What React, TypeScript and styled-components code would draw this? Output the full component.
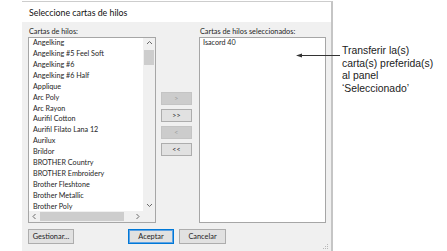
import React from "react";
import styled, { createGlobalStyle, css } from "styled-components";

const Global = createGlobalStyle`
  html, body { margin: 0; padding: 0; background: #ffffff; }
  body { font-family: Lato, "Noto Sans", sans-serif; }
`;

const Stage = styled.div`
  position: relative;
  width: 447px;
  height: 251px;
  overflow: hidden;
  display: flex;
  align-items: flex-start;
`;

const Dialog = styled.div`
  position: relative;
  margin: 1px 0 0 22px;
  width: 309px;
  height: 250px;
  border-top: 1px solid #cdcdcd;
  border-right: 2px solid #c5c5c5;
  display: flex;
  flex-direction: column;
  font-family: Lato, "Noto Sans", sans-serif;
  font-size: 7.2px;
  color: #1e1e1e;
`;

const TitleBar = styled.div`
  height: 20px;
  display: flex;
  align-items: center;
  padding-left: 7px;
  background: #ffffff;
  font-size: 8.8px;
  color: #111;
`;

const Body = styled.div`
  flex: 1;
  background: #f0f0f0;
  padding: 4px 5px 0 6px;
  display: flex;
  flex-direction: column;
`;

const MainRow = styled.div`
  display: flex;
  align-items: flex-start;
`;

const Column = styled.div`
  display: flex;
  flex-direction: column;
`;

const Label = styled.div`
  height: 11px;
  line-height: 11px;
  padding-left: 1px;
  white-space: nowrap;
  font-size: 7.3px;
`;

const ListBox = styled.div<{ $w: number; $scroll?: boolean }>`
  box-sizing: border-box;
  width: ${(p) => p.$w}px;
  height: 186px;
  border: 1px solid #a6a6a6;
  background: #ffffff;
  display: grid;
  ${(p) =>
    p.$scroll
      ? css`
          grid-template-columns: 1fr 12px;
          grid-template-rows: 1fr 11px;
        `
      : css`
          grid-template-columns: 1fr;
          grid-template-rows: 1fr;
        `}
`;

const Items = styled.div<{ $pad: number }>`
  overflow: hidden;
  padding-left: ${(p) => p.$pad}px;
`;

const Item = styled.div`
  height: 10.93px;
  line-height: 10.93px;
  white-space: nowrap;
`;

const VScroll = styled.div`
  background: #f0f0f0;
  display: grid;
  grid-template-rows: 11px 1fr 11px;
`;

const HScroll = styled.div`
  background: #f0f0f0;
  display: grid;
  grid-template-columns: 11px 1fr 11px;
`;

const Corner = styled.div`
  background: #f0f0f0;
`;

const ArrowCell = styled.div`
  display: flex;
  align-items: center;
  justify-content: center;
`;

const VTrack = styled.div`
  padding: 1px 1px 0 1px;
`;

const VThumb = styled.div`
  height: 15px;
  background: #cdcdcd;
`;

const HTrack = styled.div`
  padding: 1px 0 0 0;
`;

const HThumb = styled.div`
  width: 84px;
  height: 9px;
  background: #cdcdcd;
`;

const Middle = styled.div`
  display: flex;
  flex-direction: column;
  gap: 4px;
  margin: 0 7px 0 5px;
  padding-top: 66px;
`;

const Btn = styled.button<{ $w: number; $h: number; $primary?: boolean }>`
  box-sizing: border-box;
  width: ${(p) => p.$w}px;
  height: ${(p) => p.$h}px;
  padding: 0;
  margin: 0;
  font-family: inherit;
  font-size: 7.4px;
  line-height: 1;
  color: #1e1e1e;
  background: #e1e1e1;
  border: 1px solid #adadad;
  display: flex;
  align-items: center;
  justify-content: center;
  white-space: nowrap;
  ${(p) =>
    p.$primary &&
    css`
      border-color: #0078d7;
      box-shadow: inset 0 0 0 1px #5fa3e3;
    `}
  &:disabled {
    background: #cccccc;
    border-color: #c4c4c4;
    color: #9c9c9c;
  }
`;

const NavText = styled.span`
  font-size: 7px;
  letter-spacing: 0.3px;
`;

const BottomRow = styled.div`
  margin-top: 6px;
  display: grid;
  grid-template-columns: 1fr auto 1fr;
  align-items: center;
`;

const CenterGroup = styled.div`
  display: flex;
  gap: 5px;
`;

const Grip = styled.svg`
  position: absolute;
  right: 2px;
  bottom: 2px;
`;

const Note = styled.div`
  position: relative;
  margin: 45px 0 0 9px;
  font-family: "Liberation Sans", Arial, sans-serif;
  font-size: 10.4px;
  line-height: 12.5px;
  color: #222;
  white-space: nowrap;
`;

const NoteArrow = styled.svg`
  position: absolute;
  left: -46px;
  top: 8px;
`;

const Chevron = ({ dir }: { dir: "up" | "down" | "left" | "right" }) => {
  const pts = {
    up: "1,4 3.5,1.5 6,4",
    down: "1,2 3.5,4.5 6,2",
    left: "4.5,1 2,3.5 4.5,6",
    right: "2.5,1 5,3.5 2.5,6",
  }[dir];
  return (
    <svg width={7} height={7} viewBox="0 0 7 7">
      <polyline points={pts} fill="none" stroke="#6a6a6a" strokeWidth="1" />
    </svg>
  );
};

const threads = [
  "Angelking",
  "Angelking #5 Feel Soft",
  "Angelking #6",
  "Angelking #6 Half",
  "Applique",
  "Arc Poly",
  "Arc Rayon",
  "Aurifil Cotton",
  "Aurifil Filato Lana 12",
  "Aurilux",
  "Brildor",
  "BROTHER Country",
  "BROTHER Embroidery",
  "Brother Fleshtone",
  "Brother Metallic",
  "Brother Poly",
];

export default function App() {
  return (
    <>
      <Global />
      <Stage>
        <Dialog>
          <TitleBar>Seleccione cartas de hilos</TitleBar>
          <Body>
            <MainRow>
              <Column>
                <Label>Cartas de hilos:</Label>
                <ListBox $w={128} $scroll>
                  <Items $pad={4}>
                    {threads.map((t) => (
                      <Item key={t}>{t}</Item>
                    ))}
                  </Items>
                  <VScroll>
                    <ArrowCell>
                      <Chevron dir="up" />
                    </ArrowCell>
                    <VTrack>
                      <VThumb />
                    </VTrack>
                    <ArrowCell>
                      <Chevron dir="down" />
                    </ArrowCell>
                  </VScroll>
                  <HScroll>
                    <ArrowCell>
                      <Chevron dir="left" />
                    </ArrowCell>
                    <HTrack>
                      <HThumb />
                    </HTrack>
                    <ArrowCell>
                      <Chevron dir="right" />
                    </ArrowCell>
                  </HScroll>
                  <Corner />
                </ListBox>
              </Column>
              <Middle>
                <Btn $w={31} $h={13} disabled>
                  <NavText>&gt;</NavText>
                </Btn>
                <Btn $w={31} $h={13}>
                  <NavText>&gt;&gt;</NavText>
                </Btn>
                <Btn $w={31} $h={13} disabled>
                  <NavText>&lt;</NavText>
                </Btn>
                <Btn $w={31} $h={13}>
                  <NavText>&lt;&lt;</NavText>
                </Btn>
              </Middle>
              <Column>
                <Label>Cartas de hilos seleccionados:</Label>
                <ListBox $w={127}>
                  <Items $pad={3}>
                    <Item>Isacord 40</Item>
                  </Items>
                </ListBox>
              </Column>
            </MainRow>
            <BottomRow>
              <div>
                <Btn $w={46} $h={15}>Gestionar...</Btn>
              </div>
              <CenterGroup>
                <Btn $w={46} $h={15} $primary>
                  Aceptar
                </Btn>
                <Btn $w={47} $h={15}>Cancelar</Btn>
              </CenterGroup>
              <div />
            </BottomRow>
          </Body>
          <Grip width="6" height="6" viewBox="0 0 6 6">
            <rect x="4" y="0" width="1" height="1" fill="#b8b8b8" />
            <rect x="2" y="2" width="1" height="1" fill="#b8b8b8" />
            <rect x="4" y="2" width="1" height="1" fill="#b8b8b8" />
            <rect x="0" y="4" width="1" height="1" fill="#b8b8b8" />
            <rect x="2" y="4" width="1" height="1" fill="#b8b8b8" />
            <rect x="4" y="4" width="1" height="1" fill="#b8b8b8" />
          </Grip>
        </Dialog>
        <Note>
          <NoteArrow width="45" height="5" viewBox="0 0 45 5">
            <line x1="4" y1="2.5" x2="44" y2="2.5" stroke="#333" strokeWidth="1" />
            <polygon points="0,2.5 6,0.5 6,4.5" fill="#333" />
          </NoteArrow>
          <div>Transferir la(s)</div>
          <div>carta(s) preferida(s)</div>
          <div>al panel</div>
          <div>‘Seleccionado’</div>
        </Note>
      </Stage>
    </>
  );
}
